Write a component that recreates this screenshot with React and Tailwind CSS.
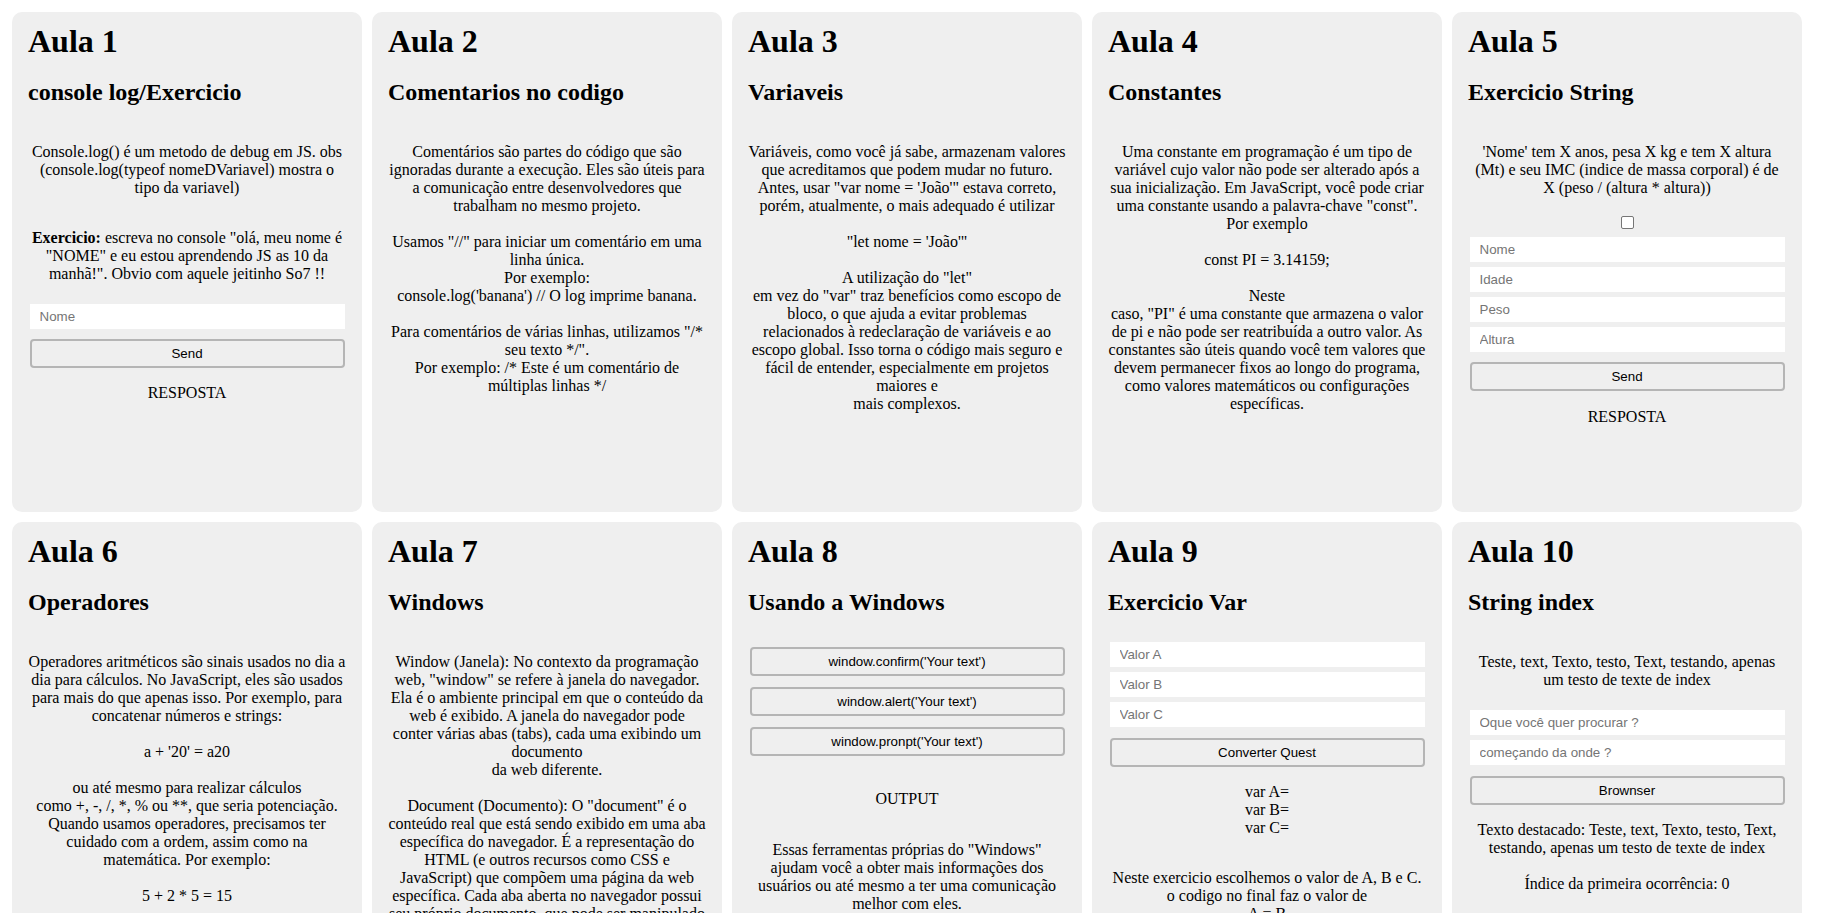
import React from 'react';

// Small form pieces used across the cards
const Field = ({ placeholder, className = '' }) => (
  <input
    type="text"
    placeholder={placeholder}
    className={`block w-[315px] h-[25px] mx-auto bg-white px-[10px] text-[13.33px] text-black font-['Liberation_Sans',Arial,sans-serif] placeholder:text-[#757575] outline-none ${className}`}
  />
);

const Btn = ({ children, className = '' }) => (
  <button
    className={`block w-[315px] h-[29px] mx-auto bg-[#efefef] border-2 border-[#b5b5b5] rounded-[4px] text-[13.33px] text-black font-['Liberation_Sans',Arial,sans-serif] ${className}`}
  >
    {children}
  </button>
);

const Card = ({ aula, title, children }) => (
  <div className="w-[350px] h-[500px] shrink-0 overflow-hidden bg-[#efefef] rounded-[10px] px-4 pt-[11px] text-center text-black">
    <h1 className="text-left text-[32px] font-bold leading-[37px]">Aula {aula}</h1>
    <h2 className="mt-[18px] text-left text-[24px] font-bold leading-[28px]">{title}</h2>
    {children}
  </div>
);

const App = () => {
  return (
    <div className="flex flex-wrap gap-[10px] pl-[12px] pt-[12px] min-h-screen bg-white text-[16px] leading-[18px] font-['Liberation_Serif','Times_New_Roman',serif]">

      {/* AULA 1 */}
      <Card aula="1" title="console log/Exercicio">
        <p className="mt-[37px]">
          Console.log() é um metodo de debug em JS. obs (console.log(typeof nomeDVariavel) mostra o tipo da variavel)
        </p>
        <p className="mt-[32px]">
          <b>Exercicio:</b> escreva no console "olá, meu nome é "NOME" e eu estou aprendendo JS as 10 da manhã!". Obvio com aquele jeitinho So7 !!
        </p>
        <Field placeholder="Nome" className="mt-[21px]" />
        <Btn className="mt-[10px]">Send</Btn>
        <p className="mt-[16px]">RESPOSTA</p>
      </Card>

      {/* AULA 2 */}
      <Card aula="2" title="Comentarios no codigo">
        <p className="mt-[37px]">
          Comentários são partes do código que são ignoradas durante a execução. Eles são úteis para a comunicação entre desenvolvedores que trabalham no mesmo projeto.
          <br /><br />
          Usamos "//" para iniciar um comentário em uma linha única.
          <br />
          Por exemplo:
          <br />
          console.log('banana') // O log imprime banana.
          <br /><br />
          Para comentários de várias linhas, utilizamos "/* seu texto */".
          <br />
          Por exemplo: /* Este é um comentário de múltiplas linhas */
        </p>
      </Card>

      {/* AULA 3 */}
      <Card aula="3" title="Variaveis">
        <p className="mt-[37px]">
          Variáveis, como você já sabe, armazenam valores que acreditamos que podem mudar no futuro. Antes, usar "var nome = 'João'" estava correto, porém, atualmente, o mais adequado é utilizar
          <br /><br />
          "let nome = 'João'"
          <br /><br />
          A utilização do "let"
          <br />
          em vez do "var" traz benefícios como escopo de bloco, o que ajuda a evitar problemas relacionados à redeclaração de variáveis e ao escopo global. Isso torna o código mais seguro e fácil de entender, especialmente em projetos maiores e
          <br />
          mais complexos.
        </p>
      </Card>

      {/* AULA 4 */}
      <Card aula="4" title="Constantes">
        <p className="mt-[37px]">
          Uma constante em programação é um tipo de variável cujo valor não pode ser alterado após a sua inicialização. Em JavaScript, você pode criar uma constante usando a palavra-chave "const".
          <br />
          Por exemplo
          <br /><br />
          const PI = 3.14159;
          <br /><br />
          Neste
          <br />
          caso, "PI" é uma constante que armazena o valor de pi e não pode ser reatribuída a outro valor. As constantes são úteis quando você tem valores que devem permanecer fixos ao longo do programa, como valores matemáticos ou configurações específicas.
        </p>
      </Card>

      {/* AULA 5 */}
      <Card aula="5" title="Exercicio String">
        <p className="mt-[37px]">
          'Nome' tem X anos, pesa X kg e tem X altura (Mt) e seu IMC (indice de massa corporal) é de X (peso / (altura * altura))
        </p>
        <input
          type="checkbox"
          className="block appearance-none mx-auto mt-[19px] w-[13px] h-[13px] bg-white border border-[#767676] rounded-[2px]"
        />
        <div className="mt-[8px] flex flex-col gap-[5px]">
          <Field placeholder="Nome" />
          <Field placeholder="Idade" />
          <Field placeholder="Peso" />
          <Field placeholder="Altura" />
        </div>
        <Btn className="mt-[10px]">Send</Btn>
        <p className="mt-[17px]">RESPOSTA</p>
      </Card>

      {/* AULA 6 */}
      <Card aula="6" title="Operadores">
        <p className="mt-[37px]">
          Operadores aritméticos são sinais usados no dia a dia para cálculos. No JavaScript, eles são usados para mais do que apenas isso. Por exemplo, para concatenar números e strings:
          <br /><br />
          a + '20' = a20
          <br /><br />
          ou até mesmo para realizar cálculos
          <br />
          como +, -, /, *, % ou **, que seria potenciação. Quando usamos operadores, precisamos ter cuidado com a ordem, assim como na matemática. Por exemplo:
          <br /><br />
          5 + 2 * 5 = 15
          <br /><br />
          (5 + 2) * 5 = 35
        </p>
      </Card>

      {/* AULA 7 */}
      <Card aula="7" title="Windows">
        <p className="mt-[37px]">
          Window (Janela): No contexto da programação web, "window" se refere à janela do navegador. Ela é o ambiente principal em que o conteúdo da web é exibido. A janela do navegador pode conter várias abas (tabs), cada uma exibindo um documento
          <br />
          da web diferente.
          <br /><br />
          Document (Documento): O "document" é o conteúdo real que está sendo exibido em uma aba específica do navegador. É a representação do HTML (e outros recursos como CSS e JavaScript) que compõem uma página da web específica. Cada aba aberta no navegador possui seu próprio documento, que pode ser manipulado por meio do JavaScript.
        </p>
      </Card>

      {/* AULA 8 */}
      <Card aula="8" title="Usando a Windows">
        <div className="mt-[31px] flex flex-col gap-[11px]">
          <Btn>window.confirm('Your text')</Btn>
          <Btn>window.alert('Your text')</Btn>
          <Btn>window.pronpt('Your text')</Btn>
        </div>
        <p className="mt-[34px]">OUTPUT</p>
        <p className="mt-[33px]">
          Essas ferramentas próprias do "Windows" ajudam você a obter mais informações dos usuários ou até mesmo a ter uma comunicação melhor com eles.
        </p>
      </Card>

      {/* AULA 9 */}
      <Card aula="9" title="Exercicio Var">
        <div className="mt-[26px] flex flex-col gap-[5px]">
          <Field placeholder="Valor A" />
          <Field placeholder="Valor B" />
          <Field placeholder="Valor C" />
        </div>
        <Btn className="mt-[11px]">Converter Quest</Btn>
        <p className="mt-[16px]">
          var A=<br />var B=<br />var C=
        </p>
        <p className="mt-[32px]">
          Neste exercicio escolhemos o valor de A, B e C.
          <br />
          o codigo no final faz o valor de
          <br />
          A = B<br />B = C<br />C = A
        </p>
      </Card>

      {/* AULA 10 */}
      <Card aula="10" title="String index">
        <p className="mt-[37px]">
          Teste, text, Texto, testo, Text, testando, apenas um testo de texte de index
        </p>
        <div className="mt-[21px] flex flex-col gap-[5px]">
          <Field placeholder="Oque você quer procurar ?" />
          <Field placeholder="começando da onde ?" />
        </div>
        <Btn className="mt-[11px]">Brownser</Btn>
        <p className="mt-[16px]">
          Texto destacado: Teste, text, Texto, testo, Text, testando, apenas um testo de texte de index
        </p>
        <p className="mt-[18px]">Índice da primeira ocorrência: 0</p>
      </Card>

    </div>
  );
};

export default App;
